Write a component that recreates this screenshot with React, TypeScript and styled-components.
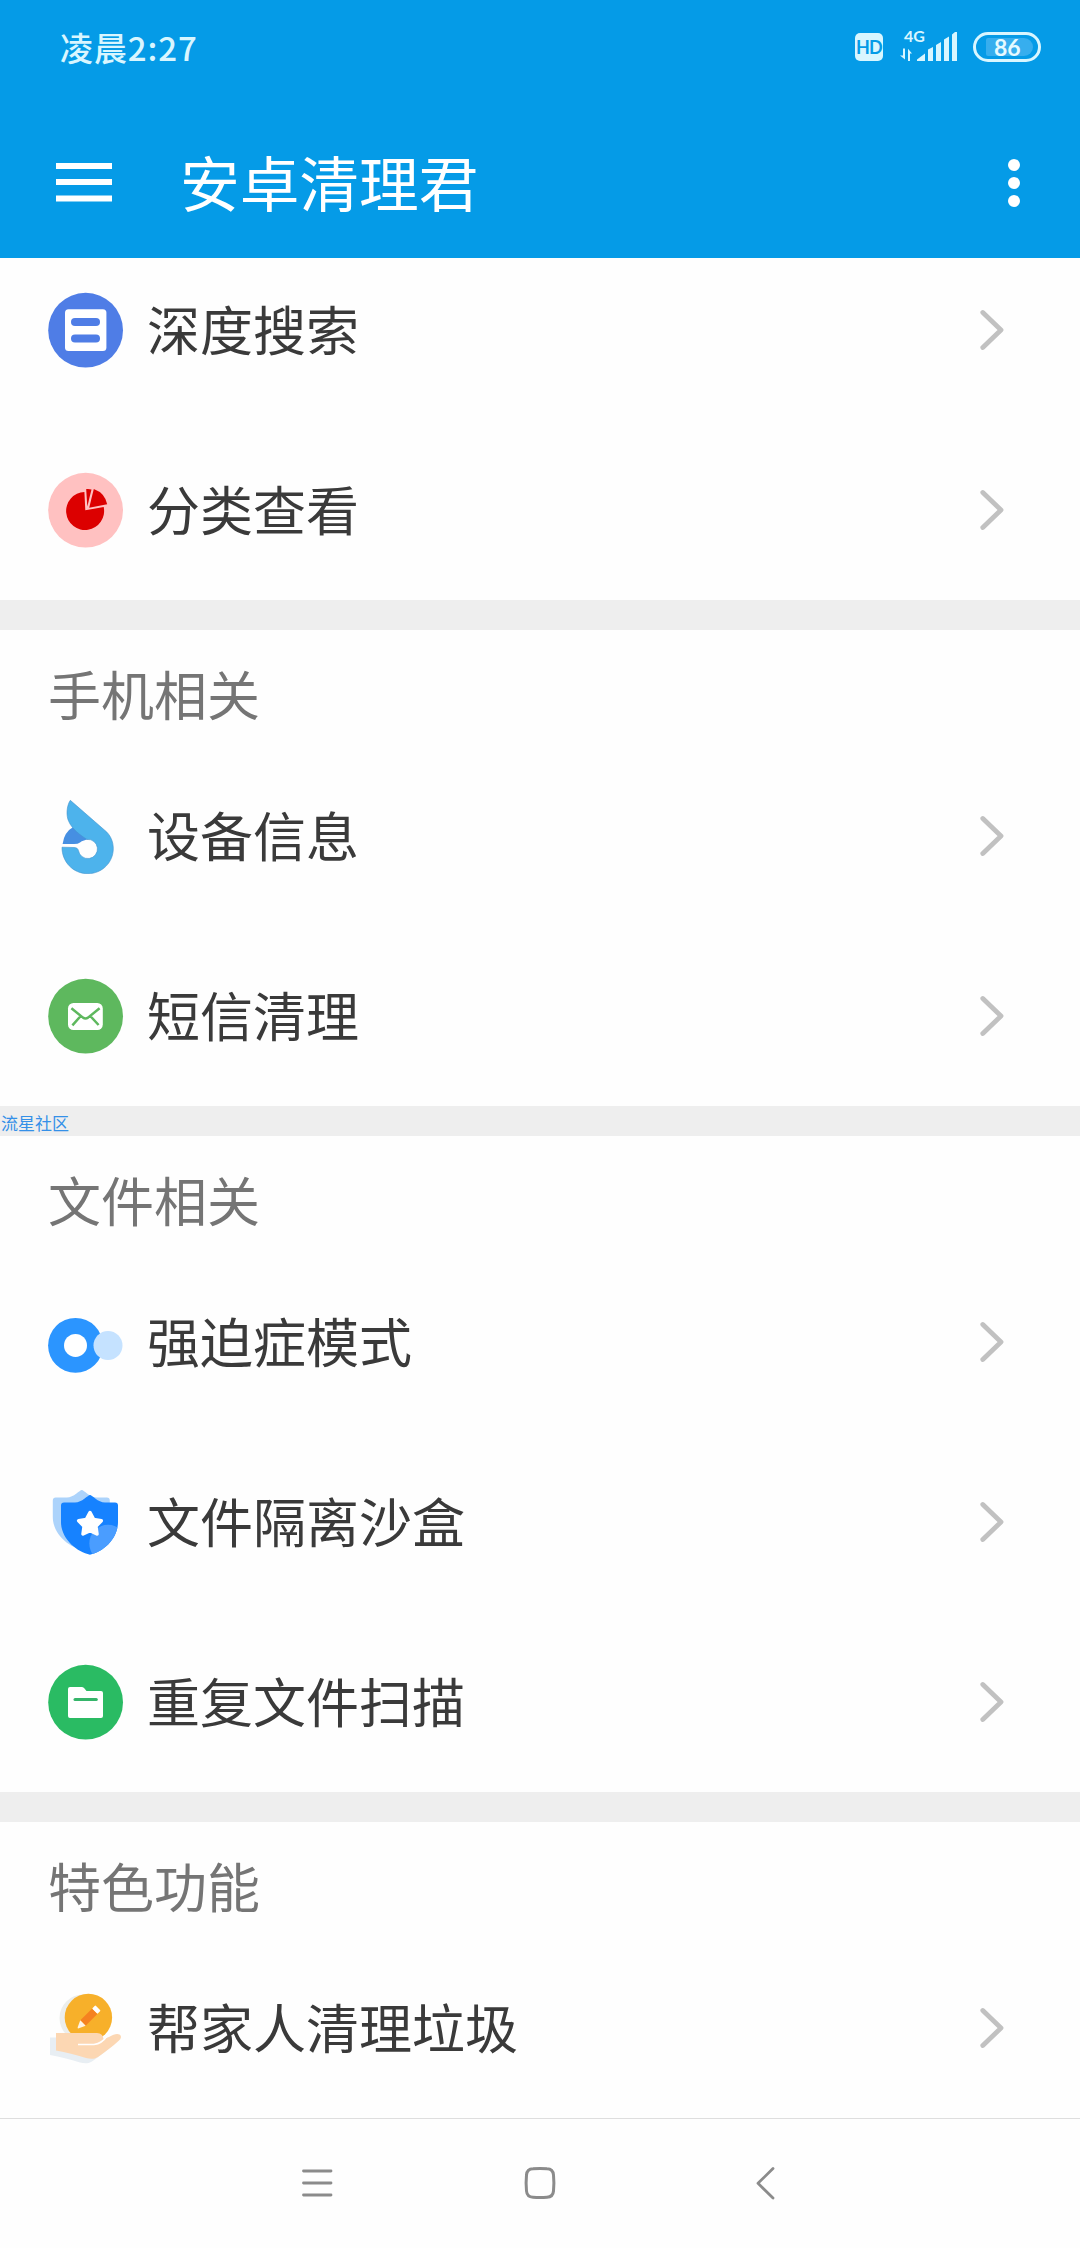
import React from "react";
import styled, { createGlobalStyle } from "styled-components";

const GlobalStyle = createGlobalStyle`
  * { box-sizing: border-box; }
  body {
    margin: 0;
    background: #fefefe;
    font-family: "Noto Sans CJK SC", "Noto Sans", sans-serif;
  }
`;

const Screen = styled.div`
  display: flex;
  flex-direction: column;
  width: 1080px;
  height: 2248px;
  overflow: hidden;
  background: #fefefe;
`;

const Header = styled.header`
  display: flex;
  flex-direction: column;
  flex: none;
  height: 258px;
  background: #059be7;
`;

const StatusBar = styled.div`
  display: flex;
  align-items: center;
  justify-content: space-between;
  height: 94px;
  padding: 0 39px 0 60px;
`;

const Clock = styled.span`
  font-size: 33px;
  font-weight: 500;
  line-height: 48px;
  color: #d9f6ff;
  letter-spacing: 0.9px;
`;

const StatusIcons = styled.div`
  display: flex;
  align-items: center;
`;

const HdBadge = styled.span`
  display: flex;
  align-items: center;
  justify-content: center;
  width: 28px;
  height: 28px;
  margin-right: 17px;
  border-radius: 5px;
  background: #d9f6ff;
  color: #059be7;
  font: 700 18px/28px Lato, sans-serif;
  letter-spacing: -0.8px;
`;

const Signal = styled.div`
  display: flex;
  flex-direction: column;
  width: 57px;
  height: 34px;
  margin-right: 16px;
`;

const Network = styled.span`
  height: 0;
  padding-left: 4px;
  color: #d9f6ff;
  font: 700 16px/12px Lato, sans-serif;
`;

const Battery = styled.span`
  display: flex;
  align-items: center;
  justify-content: center;
  width: 68px;
  height: 30px;
  padding: 0 5px 0 10px;
  border: 3px solid #d9f6ff;
  border-radius: 15px;
`;

const BatteryLevel = styled.span`
  display: flex;
  align-items: center;
  width: 49px;
  height: 18px;
  padding-left: 8px;
  border-radius: 2px 9px 9px 2px;
  background: #37aeee;
  color: #e6faff;
  font: 700 23px/18px Lato, sans-serif;
`;

const Toolbar = styled.div`
  display: flex;
  align-items: center;
  height: 164px;
  padding: 14px 60px 0 56px;
`;

const Title = styled.h1`
  flex: 1;
  margin: 0 0 4px 68px;
  color: #fff;
  font-size: 59.7px;
  font-weight: 400;
  line-height: 88px;
`;

const Content = styled.main`
  display: flex;
  flex: none;
  flex-direction: column;
  height: 1860px;
`;

const Section = styled.section<{ $clipped?: boolean }>`
  display: flex;
  flex: none;
  flex-direction: column;
  justify-content: flex-end;
  height: ${(p) => (p.$clipped ? "342px" : "auto")};
  overflow: hidden;
`;

const SectionTitle = styled.h2`
  height: 116px;
  margin: 0;
  padding: 24px 0 0 48px;
  color: #757575;
  font-size: 53px;
  font-weight: 400;
  line-height: 78px;
`;

const Divider = styled.div`
  display: flex;
  flex: none;
  align-items: flex-end;
  height: 30px;
  padding: 0 0 3px 1px;
  background: #eee;
`;

const Watermark = styled.span`
  color: #3490e8;
  font-size: 17px;
  font-weight: 400;
  line-height: 20px;
`;

const Row = styled.div`
  display: flex;
  flex: none;
  align-items: center;
  height: 180px;
  padding: 0 75px 0 48px;
`;

const Label = styled.span`
  flex: 1;
  margin: 0 0 4px 23px;
  color: #3a3a3a;
  font-size: 53px;
  line-height: 78px;
`;

const NavBar = styled.nav`
  display: grid;
  flex: none;
  grid-template-columns: 34px 34px 20px;
  align-items: center;
  column-gap: 189px;
  height: 130px;
  padding: 0 0 2px 300px;
  border-top: 1px solid #dedede;
`;

const BackIcon = styled.svg`
  margin-left: 10px;
`;

const ItemSvg = ({ children }: { children: React.ReactNode }) => (
  <svg width="76" height="76" viewBox="0 0 76 76" fill="none">
    {children}
  </svg>
);

const SearchIcon = () => (
  <ItemSvg>
    <circle cx="37.6" cy="38.2" r="37.4" fill="#4f7de6" />
    <rect x="17" y="17.3" width="41.4" height="41.6" rx="3.5" fill="#fff" />
    <rect x="23" y="26" width="29" height="8" rx="4" fill="#4f7de6" />
    <rect x="23" y="42.4" width="29" height="8" rx="4" fill="#4f7de6" />
  </ItemSvg>
);

const PieIcon = () => (
  <ItemSvg>
    <circle cx="37.6" cy="38.2" r="37.4" fill="#ffc1c1" />
    <g fill="#dc0000">
      <path d="M37.3 38.3L36.4 20A19 19 0 1 0 55.7 35Z" />
      <path d="M38.2 17Q41 16.7 43.5 17.4L39.3 34.5Z" />
      <path d="M45.8 16.9Q57 21 59.2 32.3L41.2 35.8Z" />
    </g>
  </ItemSvg>
);

const DeviceIcon = () => (
  <ItemSvg>
    <path d="M14.6 46Q16 34 26 28.5L42 41Q35 42 32 44.5Q30 46 26 46Z" fill="#468fe2" />
    <path
      d="M22.3 2.3C18.5 8 18 18 20.8 23.5C24 31 32 37 39 41.4A9.6 9.6 0 1 1 30.4 52.5C30 50.5 28.5 49.6 26 49.5L14 49.2C13.8 63.5 25 75.7 39.7 75.7C54 75.7 65.3 64.5 65.3 50.5C65.3 43 62 36.5 57 32.5Z"
      fill="#4db3ec"
      stroke="#4393cf"
      strokeWidth="0.6"
    />
  </ItemSvg>
);

const MailIcon = () => (
  <ItemSvg>
    <circle cx="37.6" cy="38.2" r="37.4" fill="#5eb85e" />
    <rect x="20" y="25" width="34.8" height="27" rx="5.5" fill="#fff" />
    <path
      d="M23.4 30.2L35 39.6Q37.5 41.2 40 39.6L51.6 30.2M32.3 38.5L24.4 47.3M42.7 38.5L50.6 47"
      stroke="#5eb85e"
      strokeWidth="2.5"
    />
  </ItemSvg>
);

const ModeIcon = () => (
  <ItemSvg>
    <circle cx="27.5" cy="41.4" r="27.4" fill="#2b95ff" />
    <circle cx="27.5" cy="41.4" r="11.5" fill="#fff" />
    <circle cx="60" cy="41.5" r="14.5" fill="#c5e2ff" />
  </ItemSvg>
);

const SHIELD =
  "M42 11C44 11 50 18.5 57 18.5L67 18.5Q70 18.5 70 21.5L70 38C70 55 55 68 42 70.7C29 68 13 55 13 38L13 21.5Q13 18.5 16 18.5L27 18.5C34 18.5 40 11 42 11Z";

const ShieldIcon = () => (
  <ItemSvg>
    <path d={SHIELD} transform="translate(-8.2 -5)" fill="#acd3fb" />
    <clipPath id="shield">
      <path d={SHIELD} />
    </clipPath>
    <path d={SHIELD} fill="#1682ff" />
    <circle cx="60" cy="59.5" r="18.7" fill="#4a9dff" clipPath="url(#shield)" />
    <path
      d="M42 28.5L45.6 35.4L53.3 36.7L47.9 42.3L49 50L42 46.6L35 50L36.1 42.3L30.7 36.7L38.4 35.4Z"
      fill="#fff"
      stroke="#fff"
      strokeWidth="3.5"
      strokeLinejoin="round"
    />
  </ItemSvg>
);

const FolderIcon = () => (
  <ItemSvg>
    <circle cx="37.6" cy="38.2" r="37.4" fill="#2abb63" />
    <path
      d="M22 23H34Q35.5 23 36.5 24.5L38.5 27H53Q55 27 55 29V52Q55 54 53 54H22Q20 54 20 52V25Q20 23 22 23Z"
      fill="#fff"
    />
    <path d="M27 35.5H48.3" stroke="#35b56a" strokeWidth="3" strokeLinecap="round" />
  </ItemSvg>
);

const HAND =
  "M8 43H49Q55 43.5 55.500 49L61 47C66 43.5 70 43.5 71.5 44.5C74 46 73 49 71 50.5C64 57 56 62.5 50 67C46 69.5 42 69 38 68C28 65 18 62 8 60.5Z";

const HandIcon = () => (
  <ItemSvg>
    <circle cx="35" cy="28" r="23.5" fill="#eceeec" />
    <path d={HAND} transform="translate(-6 4.5)" fill="#e8eef3" />
    <circle cx="40.4" cy="27.4" r="23.7" fill="#f7b02a" />
    <path d={HAND} fill="#fcd7b3" />
    <path d="M30 54.5H46Q54 53.5 59 46" stroke="#fff" strokeWidth="1.6" />
    <g transform="translate(40.5 27.5) rotate(45)">
      <rect x="-3.8" y="-13.5" width="7.6" height="4.8" rx="1" fill="#fff" />
      <rect x="-3.8" y="-8.7" width="7.6" height="16.5" fill="#f58220" />
      <path d="M-3.8 7.8H3.8L0.8 14.5Q0 15.8 -0.8 14.5Z" fill="#fff3e2" />
    </g>
  </ItemSvg>
);

const Chevron = () => (
  <svg width="25" height="42" viewBox="0 0 25 42" fill="none">
    <path
      d="M2.8 3.5L21 21L2.8 38.5"
      stroke="#c1c1c1"
      strokeWidth="4.8"
      strokeLinecap="round"
      strokeLinejoin="round"
    />
  </svg>
);

const SignalBars = () => (
  <svg width="57" height="34" viewBox="0 0 57 34" fill="#d9f6ff">
    <path d="M0 25.5L5 29.5V18.5H3V25.5ZM8 31V18.8L12 23.5H10V31Z" />
    <path d="M17 31V29.5L25 23.5V31ZM28 31V19.5L33 17V31ZM36 31V15L41 12V31ZM44 31V9.5L49 6.5V31ZM52 31V4.5L55 2H57V31Z" />
  </svg>
);

type Item = { icon: React.ComponentType; label: string };
type Group = { title?: string; mark?: string; items: Item[] };

const groups: Group[] = [
  {
    items: [
      { icon: SearchIcon, label: "深度搜索" },
      { icon: PieIcon, label: "分类查看" },
    ],
  },
  {
    title: "手机相关",
    mark: "流星社区",
    items: [
      { icon: DeviceIcon, label: "设备信息" },
      { icon: MailIcon, label: "短信清理" },
    ],
  },
  {
    title: "文件相关",
    items: [
      { icon: ModeIcon, label: "强迫症模式" },
      { icon: ShieldIcon, label: "文件隔离沙盒" },
      { icon: FolderIcon, label: "重复文件扫描" },
    ],
  },
  {
    title: "特色功能",
    items: [{ icon: HandIcon, label: "帮家人清理垃圾" }],
  },
];

export default function App() {
  return (
    <>
      <GlobalStyle />
      <Screen>
        <Header>
          <StatusBar>
            <Clock>凌晨2:27</Clock>
            <StatusIcons>
              <HdBadge>HD</HdBadge>
              <Signal>
                <Network>4G</Network>
                <SignalBars />
              </Signal>
              <Battery>
                <BatteryLevel>86</BatteryLevel>
              </Battery>
            </StatusIcons>
          </StatusBar>
          <Toolbar>
            <svg width="56" height="40" viewBox="0 0 56 40" fill="#fff">
              <path d="M0 0h56v6H0zM0 16h56v6H0zM0 32.5h56v6H0z" />
            </svg>
            <Title>安卓清理君</Title>
            <svg width="12" height="50" viewBox="0 0 12 50" fill="#fff">
              <circle cx="6" cy="7" r="6" />
              <circle cx="6" cy="25" r="6" />
              <circle cx="6" cy="43" r="6" />
            </svg>
          </Toolbar>
        </Header>
        <Content>
          {groups.map((group, i) => (
            <React.Fragment key={i}>
              <Section $clipped={!group.title}>
                {group.title && <SectionTitle>{group.title}</SectionTitle>}
                {group.items.map(({ icon: Icon, label }) => (
                  <Row key={label}>
                    <Icon />
                    <Label>{label}</Label>
                    <Chevron />
                  </Row>
                ))}
              </Section>
              {i < groups.length - 1 && (
                <Divider>{group.mark && <Watermark>{group.mark}</Watermark>}</Divider>
              )}
            </React.Fragment>
          ))}
        </Content>
        <NavBar>
          <svg width="34" height="36" viewBox="0 0 34 36" stroke="#8b8b8b" strokeWidth="2.8" strokeLinecap="round">
            <path d="M3.5 6H31M3.5 18H31M3.5 30H31" />
          </svg>
          <svg width="34" height="36" viewBox="0 0 34 36" fill="none" stroke="#8b8b8b" strokeWidth="3">
            <path d="M10 3.8Q17 3.3 24 3.8Q30 4 30.5 10Q31.3 18 30.5 26Q30 32 24 32.2Q17 32.8 10 32.2Q4 32 3.5 26Q2.7 18 3.5 10Q4 4 10 3.8Z" />
          </svg>
          <BackIcon width="20" height="36" viewBox="0 0 20 36" fill="none" stroke="#8b8b8b" strokeWidth="2.8" strokeLinecap="round">
            <path d="M17 3.5L2 18.3L17 33" strokeLinejoin="round" />
          </BackIcon>
        </NavBar>
      </Screen>
    </>
  );
}
